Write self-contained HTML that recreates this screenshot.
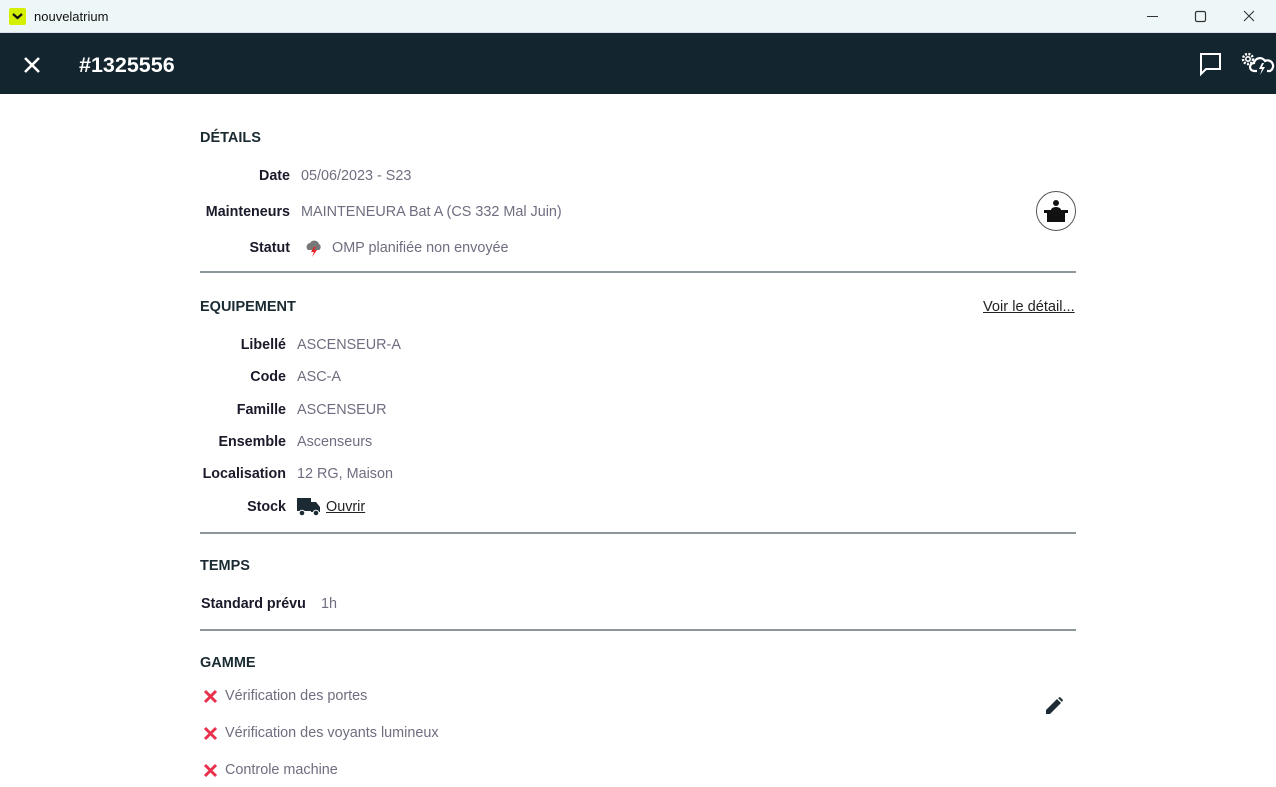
<!DOCTYPE html>
<html><head><meta charset="utf-8"><style>
*{margin:0;padding:0;box-sizing:border-box}
body{width:1276px;height:787px;overflow:hidden;background:#fff;font-family:"Liberation Sans",sans-serif;position:relative}
.a{position:absolute;white-space:nowrap}
.tb{position:absolute;left:0;top:0;width:1276px;height:33px;background:#eef7f8;border-bottom:1px solid #dde}
.hd{position:absolute;left:0;top:33px;width:1276px;height:61px;background:#13252e}
.h{font-weight:bold;font-size:14.5px;color:#1a2a33}
.l{font-weight:bold;font-size:14.3px;color:#1a1a2a;text-align:right}
.v{font-size:14.4px;color:#6e6e80}
.line{position:absolute;left:200px;width:876px;height:2px;background:#8d979b}
</style></head><body>
<div class="tb"></div>
<div class="a" style="left:9px;top:8px;width:17px;height:17px;background:#d4ef00;border-radius:2px"></div>
<svg class="a" style="left:11px;top:11px" width="13" height="10"><path d="M2 3 L6.5 7 L11 3" stroke="#111" stroke-width="2.2" fill="none"/></svg>
<div class="a" style="left:34px;top:9px;font-size:13px;color:#111">nouvelatrium</div>
<svg class="a" style="left:1140px;top:8px" width="120" height="16"><path d="M7 8.5h11" stroke="#333" stroke-width="1"/><rect x="55.5" y="3.5" width="10" height="10" rx="1.5" fill="none" stroke="#333" stroke-width="1.2"/><path d="M104 3l10 10M114 3l-10 10" stroke="#333" stroke-width="1.1"/></svg>
<div class="hd"></div>
<svg class="a" style="left:23px;top:56px" width="18" height="18"><path d="M2 2l14 14M16 2L2 16" stroke="#fff" stroke-width="2.6"/></svg>
<div class="a" style="left:79px;top:53px;font-size:21.5px;font-weight:bold;color:#fff">#1325556</div>
<svg class="a" style="left:1198px;top:52px" width="26" height="26"><path d="M2 2h20v15H8l-5 5V2z" fill="none" stroke="#fff" stroke-width="2"/></svg>
<svg class="a" style="left:1240px;top:50px" width="36" height="28"><circle cx="8" cy="9" r="5" fill="none" stroke="#fff" stroke-width="2.5" stroke-dasharray="2 1.4"/><circle cx="8" cy="9" r="2.2" fill="none" stroke="#fff" stroke-width="1.6"/><path d="M17 21h-3a4 4 0 0 1 0-8 6 6 0 0 1 11-2 5 5 0 0 1 5 10h-3" fill="none" stroke="#fff" stroke-width="2.2"/><path d="M22 13l-3 6h3l-2 6 5-8h-3l2-4z" fill="#fff"/></svg>

<div class="a h" style="left:200px;top:130px">DÉTAILS</div>
<div class="a l" style="right:986px;top:168px">Date</div><div class="a v" style="left:301px;top:168px">05/06/2023 - S23</div>
<div class="a l" style="right:986px;top:204px">Mainteneurs</div><div class="a v" style="left:301px;top:204px">MAINTENEURA Bat A (CS 332 Mal Juin)</div>
<div class="a l" style="right:986px;top:240px">Statut</div>
<svg class="a" style="left:304px;top:238px" width="20" height="20"><path d="M4 12a4 4 0 0 1 2-7 5 5 0 0 1 9 1 3.5 3.5 0 0 1 0 6z" fill="#777"/><path d="M10 9l-3 5h3l-2 5 5-7h-3l2-3z" fill="#e52222"/></svg>
<div class="a v" style="left:332px;top:240px">OMP planifiée non envoyée</div>
<svg class="a" style="left:1035px;top:190px" width="42" height="42"><circle cx="21" cy="21" r="19.5" fill="#fff" stroke="#555" stroke-width="1"/><circle cx="21" cy="13" r="3" fill="#111"/><path d="M16 20a5 3 0 0 1 10 0z" fill="#111"/><rect x="9" y="20" width="24" height="3" fill="#111"/><rect x="12" y="23" width="18" height="9" fill="#111"/></svg>
<div class="line" style="top:271px"></div>

<div class="a h" style="left:200px;top:299px">EQUIPEMENT</div>
<div class="a" style="left:983px;top:299px;font-size:14.6px;color:#222;text-decoration:underline">Voir le détail...</div>
<div class="a l" style="right:990px;top:337px">Libellé</div><div class="a v" style="left:297px;top:337px">ASCENSEUR-A</div>
<div class="a l" style="right:990px;top:369px">Code</div><div class="a v" style="left:297px;top:369px">ASC-A</div>
<div class="a l" style="right:990px;top:402px">Famille</div><div class="a v" style="left:297px;top:402px">ASCENSEUR</div>
<div class="a l" style="right:990px;top:434px">Ensemble</div><div class="a v" style="left:297px;top:434px">Ascenseurs</div>
<div class="a l" style="right:990px;top:466px">Localisation</div><div class="a v" style="left:297px;top:466px">12 RG, Maison</div>
<div class="a l" style="right:990px;top:499px">Stock</div>
<svg class="a" style="left:296px;top:497px" width="26" height="20"><path d="M1 1h14v13H1z" fill="#1c2b33"/><path d="M15 5h5l4 5v5h-9z" fill="#1c2b33"/><circle cx="6" cy="16" r="2.8" fill="#1c2b33" stroke="#fff" stroke-width="1"/><circle cx="20" cy="16" r="2.8" fill="#1c2b33" stroke="#fff" stroke-width="1"/></svg>
<div class="a" style="left:326px;top:499px;font-size:14.4px;color:#222;text-decoration:underline">Ouvrir</div>
<div class="line" style="top:532px"></div>

<div class="a h" style="left:200px;top:558px">TEMPS</div>
<div class="a l" style="left:201px;top:596px">Standard prévu</div><div class="a v" style="left:321px;top:596px">1h</div>
<div class="line" style="top:629px"></div>

<div class="a h" style="left:200px;top:655px">GAMME</div>
<svg class="a" style="left:203px;top:689px" width="15" height="15"><path d="M2 2l11 11M13 2L2 13" stroke="#e8324d" stroke-width="3"/></svg><div class="a v" style="left:225px;top:688px">Vérification des portes</div>
<svg class="a" style="left:203px;top:726px" width="15" height="15"><path d="M2 2l11 11M13 2L2 13" stroke="#e8324d" stroke-width="3"/></svg><div class="a v" style="left:225px;top:725px">Vérification des voyants lumineux</div>
<svg class="a" style="left:203px;top:763px" width="15" height="15"><path d="M2 2l11 11M13 2L2 13" stroke="#e8324d" stroke-width="3"/></svg><div class="a v" style="left:225px;top:762px">Controle machine</div>
<svg class="a" style="left:1044px;top:696px" width="20" height="20"><path d="M2 18v-4L13 3l4 4L6 18z M14 2l2-1 3 3-1 2z" fill="#1c2b33"/></svg>
</body></html>
